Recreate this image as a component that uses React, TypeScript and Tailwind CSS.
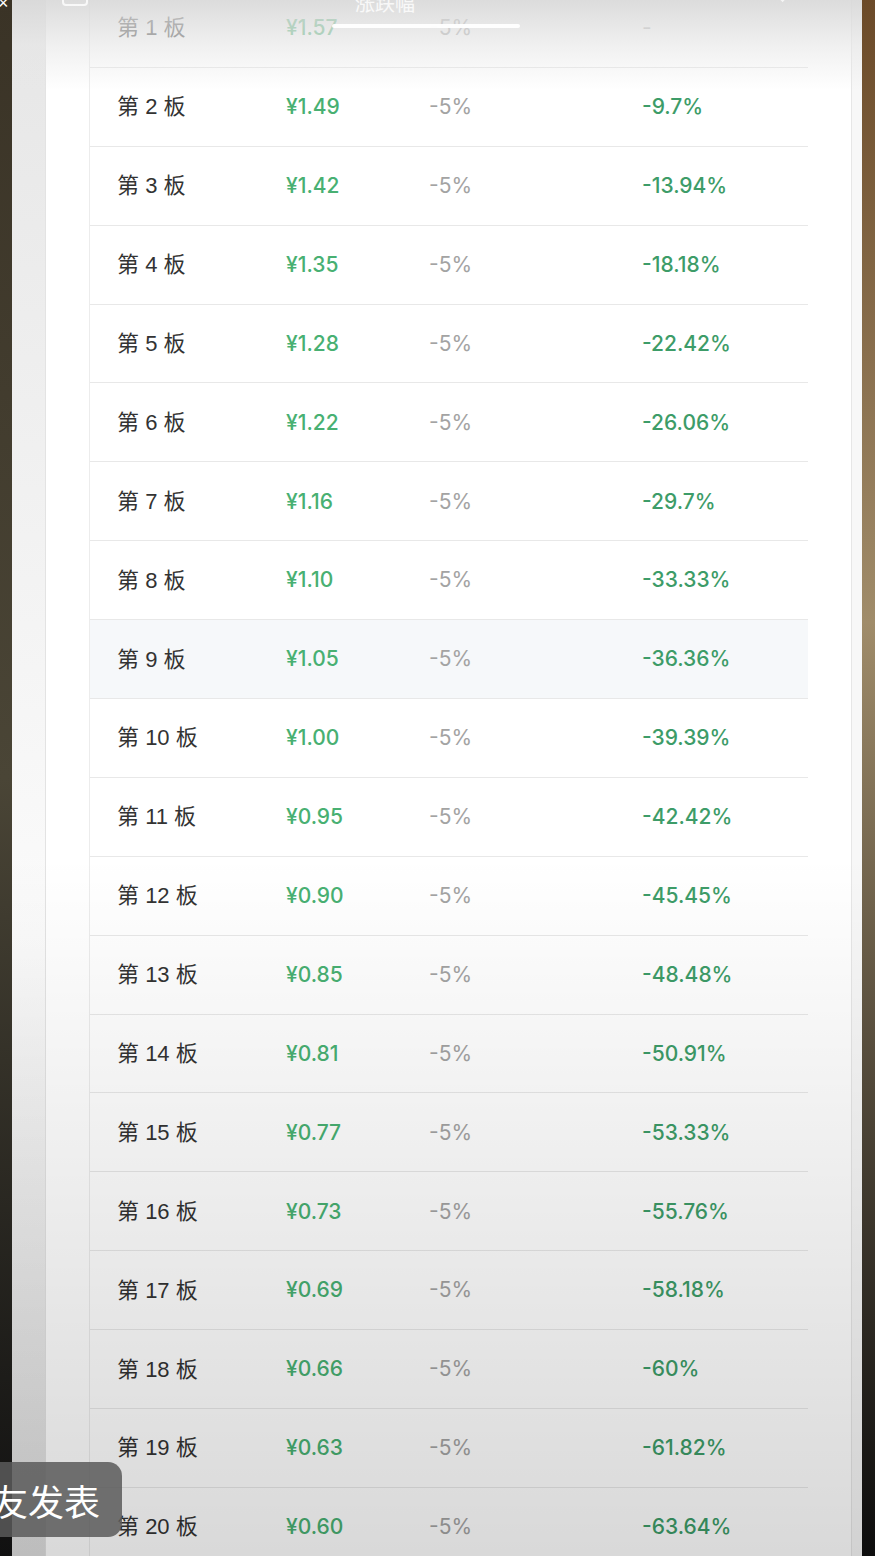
import React from 'react';

const rows: [string, string, string][] = [
  ['1', '¥1.57', '-'],
  ['2', '¥1.49', '-9.7%'],
  ['3', '¥1.42', '-13.94%'],
  ['4', '¥1.35', '-18.18%'],
  ['5', '¥1.28', '-22.42%'],
  ['6', '¥1.22', '-26.06%'],
  ['7', '¥1.16', '-29.7%'],
  ['8', '¥1.10', '-33.33%'],
  ['9', '¥1.05', '-36.36%'],
  ['10', '¥1.00', '-39.39%'],
  ['11', '¥0.95', '-42.42%'],
  ['12', '¥0.90', '-45.45%'],
  ['13', '¥0.85', '-48.48%'],
  ['14', '¥0.81', '-50.91%'],
  ['15', '¥0.77', '-53.33%'],
  ['16', '¥0.73', '-55.76%'],
  ['17', '¥0.69', '-58.18%'],
  ['18', '¥0.66', '-60%'],
  ['19', '¥0.63', '-61.82%'],
  ['20', '¥0.60', '-63.64%'],
];

const font = { fontFamily: '"Liberation Sans", "Noto Sans CJK SC", sans-serif' };
const numFont = { fontFamily: 'Inter, "Liberation Sans", sans-serif' };

export default function App() {
  return (
    <div className="relative w-[875px] h-[1556px] overflow-hidden flex bg-black" style={font}>
      {/* left video edge */}
      <div className="w-[12px] shrink-0 bg-gradient-to-b from-[#3a3326] via-[#4a4536] via-50% to-[#111] relative">
        <span className="absolute -top-[6px] -left-[2px] text-white text-[18px] leading-none">×</span>
      </div>
      <div className="w-[33px] shrink-0 bg-gradient-to-b from-[#e6e6e6] via-[#fbfbfb] via-60% to-[#dedede]" />

      {/* phone panel */}
      <div className="w-[817px] shrink-0 flex border-l border-[#e3e3e3] bg-white">
        <div className="w-[44px] shrink-0 border-r border-[#ececec]" />
        <div className="w-[718px] shrink-0 -mt-[12px]">
          {rows.map(([n, price, change], i) => (
            <div
              key={n}
              className={`h-[78.9px] flex items-center text-[21px] ${i > 0 ? 'border-t border-[#e8e8e8]' : ''} ${n === '9' ? 'bg-[#f6f8fa]' : 'bg-white'}`}
            >
              <span className="w-[196px] pl-[27px] text-[#333] text-[22px]">第 {n} 板</span>
              <span className="w-[143px] text-[#48b072] font-medium" style={numFont}>{price}</span>
              <span className="w-[213px] text-[#a3a3a3]" style={numFont}>-5%</span>
              <span className={`${n === '1' ? 'text-[#b0b0b0]' : 'text-[#3d9c68] font-medium'}`} style={numFont}>{change}</span>
            </div>
          ))}
        </div>
        <div className="w-[44px] shrink-0 border-r border-[#e6e6e6]" />
        <div className="flex-1 bg-[#f7f7f7]" />
      </div>

      {/* right video edge */}
      <div className="flex-1 bg-gradient-to-b from-[#6b4a28] via-[#a08c6a] via-40% to-[#0d0d0d]" />

      {/* header fade overlay */}
      <div className="absolute left-[12px] top-0 w-[850px] h-[90px] bg-gradient-to-b from-[#d8d8d8]/90 via-[#e6e6e6]/60 to-transparent pointer-events-none" />
      <div className="absolute left-[62px] -top-[8px] w-[26px] h-[14px] rounded-[4px] border-2 border-white/80" />
      <div className="absolute left-[355px] -top-[11px] text-white/80 text-[20px]">涨跌幅</div>
      <div className="absolute left-[770px] -top-[6px] w-[16px] h-[3px] bg-white/70 rotate-45" />
      <div className="absolute left-[332px] top-[24px] w-[188px] h-[4px] rounded-full bg-white/95" />

      {/* bottom dim overlay */}
      <div className="absolute left-[12px] bottom-0 w-[850px] h-[700px] bg-gradient-to-b from-transparent to-black/15 pointer-events-none" />

      {/* comment toast */}
      <div className="absolute -left-[20px] top-[1462px] h-[75px] w-[142px] rounded-r-[14px] bg-[#5a5a5a]/85 flex items-center pl-[12px]">
        <span className="text-white text-[36px] leading-none" style={{ fontFamily: '"Noto Sans CJK SC", sans-serif' }}>
          友发表
        </span>
      </div>
    </div>
  );
}
